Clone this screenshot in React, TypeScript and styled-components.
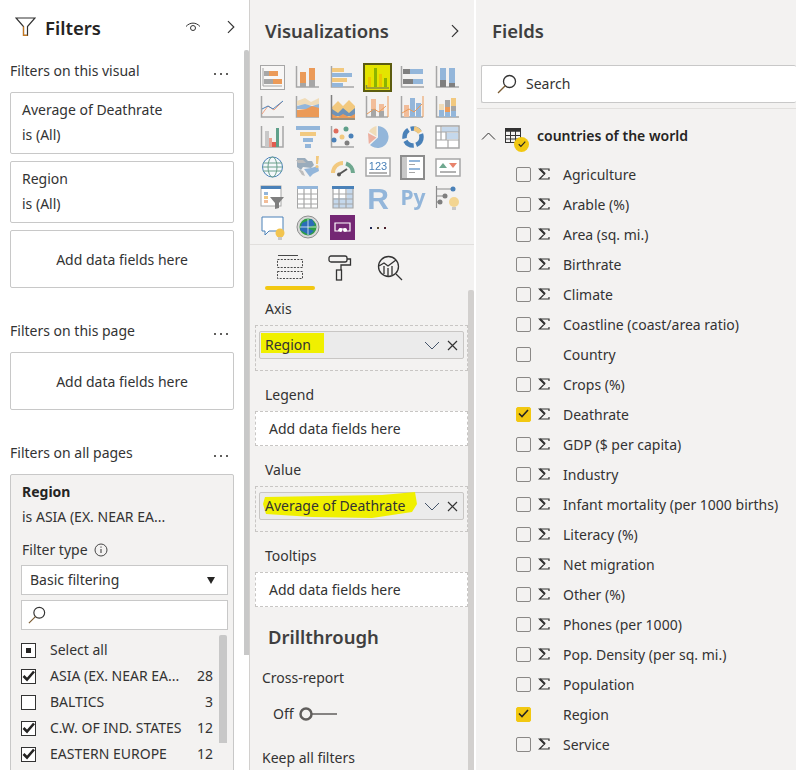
import React from "react";
import styled, { createGlobalStyle } from "styled-components";

const FONT = '"Noto Sans", "Open Sans", Arial, sans-serif';

const GlobalStyle = createGlobalStyle`
  html, body {
    margin: 0;
    padding: 0;
    height: 770px;
    overflow: hidden;
    background: #f3f2f1;
  }
  * { box-sizing: border-box; }
`;

const Page = styled.div`
  display: flex;
  width: 796px;
  height: 770px;
  overflow: hidden;
  font-family: ${FONT};
  font-size: 14px;
  color: #333;
  line-height: 22px;
`;

/* ---------- shared ---------- */
const PanelTitle = styled.div`
  font-size: 18.5px;
  font-weight: 600;
  color: #3f3f3f;
`;

const Scrollbar = styled.div<{ $left: number; $top: number; $height: number; $width: number; $color: string }>`
  position: absolute;
  left: ${(p) => p.$left}px;
  top: ${(p) => p.$top}px;
  width: ${(p) => p.$width}px;
  height: ${(p) => p.$height}px;
  background: ${(p) => p.$color};
  border-radius: 2px 2px 0 0;
`;

/* ---------- filters panel ---------- */
const FiltersPanel = styled.section`
  position: relative;
  width: 250px;
  flex: none;
  padding: 0 15px 0 10px;
  background: #fff;
  border-right: 1px solid #d2d0ce;
`;

const FiltersHeader = styled.header`
  display: flex;
  align-items: center;
  height: 54px;
  margin-left: 5px;
  ${PanelTitle} {
    margin-left: 9px;
    padding-top: 2px;
    flex: 1;
    color: #252423;
  }
`;

const HeaderIcon = styled.span<{ $mr: number }>`
  display: flex;
  margin-right: ${(p) => p.$mr}px;
`;

const SectionHead = styled.div<{ $mt: number }>`
  display: flex;
  justify-content: space-between;
  height: 22px;
  margin: ${(p) => p.$mt}px 0 10px;
`;

const Dots = styled.span`
  display: flex;
  align-items: center;
  gap: 4px;
  margin-right: 6px;
  padding-top: 5px;
  i {
    width: 2px;
    height: 2px;
    background: #605e5c;
  }
`;

const FilterCard = styled.div`
  height: 62px;
  margin-bottom: 7px;
  padding: 6px 11px;
  border: 1px solid #c8c8c8;
  border-radius: 2px;
  background: #fff;
  div + div {
    margin-top: 3px;
  }
`;

const AddCard = styled.div`
  display: flex;
  align-items: center;
  justify-content: center;
  height: 58px;
  border: 1px solid #c8c8c8;
  border-radius: 2px;
  padding-top: 1px;
`;

const ExpandedCard = styled.div`
  height: 320px;
  padding: 6px 5px 0 11px;
  border: 1px solid #c8c8c8;
  border-radius: 2px;
  background: #f3f2f1;
`;

const CardStrong = styled.div`
  font-weight: 700;
  color: #252423;
`;

const CardLine = styled.div`
  margin-top: 3px;
`;

const FilterType = styled.div`
  display: flex;
  align-items: center;
  gap: 6px;
  margin-top: 11px;
`;

const SelectBox = styled.div`
  display: flex;
  align-items: center;
  justify-content: space-between;
  height: 30px;
  margin: 4px 0 0 -1px;
  padding: 0 12px 0 8px;
  background: #fff;
  border: 1px solid #c8c8c8;
`;

const Caret = styled.span`
  width: 0;
  height: 0;
  border-left: 4px solid transparent;
  border-right: 4px solid transparent;
  border-top: 7px solid #252423;
`;

const SearchSmall = styled.div`
  display: flex;
  align-items: center;
  height: 30px;
  margin: 5px 0 0 -1px;
  padding-left: 6px;
  background: #fff;
  border: 1px solid #c8c8c8;
`;

const ValueList = styled.div`
  margin-top: 7px;
`;

const ValueRow = styled.div`
  display: flex;
  align-items: center;
  height: 26px;
  padding-right: 15px;
`;

const ValueBox = styled.span`
  display: flex;
  align-items: center;
  justify-content: center;
  flex: none;
  width: 15px;
  height: 15px;
  margin: 0 14px 0 -1px;
  border: 1px solid #333;
  background: #fff;
`;

const ValueDot = styled.i`
  width: 5px;
  height: 5px;
  background: #252423;
`;

const ValueName = styled.span`
  flex: 1;
  white-space: nowrap;
`;

/* ---------- visualizations panel ---------- */
const VizPanel = styled.section`
  position: relative;
  width: 226px;
  flex: none;
  background: #f3f2f1;
  border-right: 2px solid #fff;
`;

const PanelHeader = styled.header`
  display: flex;
  align-items: center;
  justify-content: space-between;
  height: 62px;
  padding: 0 14px 0 15px;
`;

const IconGrid = styled.div`
  display: grid;
  grid-template-columns: repeat(6, 35px);
  grid-auto-rows: 30px;
  height: 183px;
  padding-left: 5px;
  border-bottom: 1px solid #e1dfdd;
`;

const GridCell = styled.div`
  display: flex;
  align-items: center;
  justify-content: center;
  svg {
    filter: blur(0.3px);
  }
`;

const Tabs = styled.div`
  display: flex;
  height: 45px;
  padding-left: 15px;
`;

const Tab = styled.div`
  display: flex;
  flex-direction: column;
  align-items: center;
  justify-content: space-between;
  width: 50px;
  padding-top: 10px;
`;

const TabBar = styled.span<{ $active?: boolean }>`
  align-self: stretch;
  height: 4px;
  border-radius: 2px;
  background: ${(p) => (p.$active ? "#f2c811" : "transparent")};
`;

const WellLabel = styled.div<{ $mt: number }>`
  margin: ${(p) => p.$mt}px 0 5px 15px;
`;

const Well = styled.div<{ $filled?: boolean }>`
  display: flex;
  align-items: ${(p) => (p.$filled ? "flex-start" : "center")};
  width: 213px;
  height: ${(p) => (p.$filled ? 46 : 35)}px;
  margin-left: 5px;
  padding: ${(p) => (p.$filled ? "5px 3px" : "0 13px")};
  border: 1px dashed #c8c6c4;
  background: ${(p) => (p.$filled ? "#f3f2f1" : "#fff")};
`;

const FieldChip = styled.div`
  position: relative;
  display: flex;
  align-items: center;
  width: 205px;
  height: 28px;
  padding: 0 5px;
  border: 1px solid #c8c6c4;
  border-radius: 2px;
  background: #ebebeb;
`;

const ChipText = styled.span`
  position: relative;
  flex: 1;
`;

const RegionMark = styled.span`
  position: absolute;
  left: -4px;
  top: -1px;
  width: 63px;
  height: 20px;
  background: #f0f000;
`;

const ScribbleMark = styled.svg`
  position: absolute;
  left: -3px;
  top: -3px;
`;

const ChipLabel = styled.span`
  position: relative;
`;

const ChipIcons = styled.span`
  display: flex;
  align-items: center;
  gap: 7px;
`;

const DrillTitle = styled(PanelTitle)`
  margin: 16px 0 0 18px;
  line-height: 28px;
`;

const PlainLabel = styled.div<{ $mt: number }>`
  margin: ${(p) => p.$mt}px 0 0 12px;
`;

const ToggleRow = styled.div`
  display: flex;
  align-items: center;
  gap: 5px;
  height: 24px;
  margin: 13px 0 0 23px;
`;

/* ---------- fields panel ---------- */
const FieldsPanel = styled.section`
  flex: 1;
  background: #f3f2f1;
  border-left: 1px solid #f3f2f1;
`;

const SearchBox = styled.div`
  display: flex;
  align-items: center;
  gap: 9px;
  height: 38px;
  margin: 3px 0 0 4px;
  padding-left: 15px;
  background: #fff;
  border: 1px solid #c8c8c8;
  border-right: none;
  border-radius: 2px;
`;

const Rule = styled.div`
  height: 1px;
  margin-top: 5px;
  background: #e1dfdd;
`;

const TableRow = styled.div`
  position: relative;
  display: flex;
  align-items: center;
  height: 30px;
  margin-top: 12px;
  padding-left: 4px;
  font-weight: 600;
  color: #252423;
`;

const TableIcon = styled.span`
  position: relative;
  display: flex;
  margin: 0 16px 0 9px;
`;

const Badge = styled.span`
  position: absolute;
  left: 9px;
  top: 9px;
  display: flex;
  align-items: center;
  justify-content: center;
  width: 15px;
  height: 15px;
  border-radius: 50%;
  background: #f2c811;
`;

const FieldList = styled.div`
  margin-top: 8px;
`;

const FieldRow = styled.div`
  display: flex;
  align-items: center;
  height: 30px;
  padding-left: 39px;
`;

const FieldBox = styled.span<{ $checked: boolean }>`
  display: flex;
  align-items: center;
  justify-content: center;
  flex: none;
  width: 15px;
  height: 15px;
  border: 1px solid ${(p) => (p.$checked ? "#f2c811" : "#8a8886")};
  border-radius: 2px;
  background: ${(p) => (p.$checked ? "#f2c811" : "#f3f2f1")};
`;

const SigmaSlot = styled.span`
  display: flex;
  flex: none;
  justify-content: center;
  width: 32px;
  padding-right: 7px;
  padding-left: 1px;
`;

const FieldName = styled.span`
  padding-top: 1px;
  white-space: nowrap;
`;

/* ---------- small icons ---------- */
const Chevron = ({ size = 14 }: { size?: number }) => (
  <svg width={size * 0.7} height={size} viewBox="0 0 10 14" fill="none" stroke="#333" strokeWidth="1.2">
    <path d="M2 1l6 6-6 6" />
  </svg>
);

const Funnel = () => (
  <svg width="21" height="20" viewBox="0 0 21 20" fill="none" stroke="#333" strokeWidth="1.2">
    <path d="M1 1h19l-7.5 8.5v8.800h-4V9.500z" />
    <path d="M8.500 9.500v8.800h4" stroke="#c8791f" />
  </svg>
);

const Eye = () => (
  <svg width="16" height="11" viewBox="0 0 16 11" fill="none" stroke="#333" strokeWidth="1">
    <path d="M1 4.500C5 0 11 0 15 4.500" />
    <circle cx="8" cy="6" r="2.500" />
  </svg>
);

const Magnifier = ({ size }: { size: number }) => (
  <svg width={size} height={size} viewBox="0 0 20 20" fill="none" stroke="#333" strokeWidth="1.3">
    <circle cx="12.500" cy="7.500" r="6" />
    <path d="M8.200 11.800L1 19" stroke="#7a5a30" />
  </svg>
);

const Info = () => (
  <svg width="14" height="14" viewBox="0 0 14 14" fill="none" stroke="#333">
    <circle cx="7" cy="7" r="6" strokeWidth="0.9" />
    <path d="M7 6v4M7 3.500v1.200" strokeWidth="1" />
  </svg>
);

const Tick = () => (
  <svg width="13" height="12" viewBox="0 0 13 12" fill="none" stroke="#252423" strokeWidth="2.6">
    <path d="M1.500 6l3.500 3.500L12 1.500" />
  </svg>
);

const SmallTick = ({ size = 11 }: { size?: number }) => (
  <svg width={size} height={size * 0.82} viewBox="0 0 11 9" fill="none" stroke="#252423" strokeWidth="1.6">
    <path d="M1 4.500l3 3L10 1" />
  </svg>
);

const Sigma = () => (
  <svg width="12" height="12" viewBox="0 0 12 12" fill="none" stroke="#333" strokeWidth="1.2">
    <path d="M11 3V1H1.500L6.500 6 1.500 11H11V9" />
    <path d="M2 1l5 5" strokeWidth="2" />
  </svg>
);

const ChipControls = () => (
  <ChipIcons>
    <svg width="16" height="9" viewBox="0 0 16 9" fill="none" stroke="#44546a" strokeWidth="1">
      <path d="M1 1l7 7 7-7" />
    </svg>
    <svg width="11" height="11" viewBox="0 0 11 11" fill="none" stroke="#333" strokeWidth="1.2">
      <path d="M1 1l9 9M10 1l-9 9" />
    </svg>
  </ChipIcons>
);

/* ---------- visual gallery ---------- */
const OR = "#eb9a58";
const BL = "#93b6da";
const GR = "#a6a6a6";
const TN = "#f0dcb8";
const YL = "#f2c97f";
const DB = "#4a81b8";
const AX = "M1.500 1v21H24";

const Axis = ({ d = AX }: { d?: string }) => <path d={d} fill="none" stroke={GR} strokeWidth="1.500" />;
const R = (x: number, y: number, w: number, h: number, fill: string) => <rect x={x} y={y} width={w} height={h} fill={fill} />;

const visuals: React.ReactNode[] = [
  <>
    <rect x="0.500" y="0.500" width="24" height="24" fill="#f8f7f6" stroke={GR} />
    <path d="M3 3v18h19" fill="none" stroke={GR} />
    {R(4, 6, 5, 5, GR)}{R(9, 6, 9, 5, OR)}{R(4, 14, 9, 5, GR)}{R(13, 14, 9, 5, OR)}
  </>,
  <>
    <Axis />
    {R(5, 18, 6, 4, GR)}{R(5, 7, 6, 11, OR)}{R(14, 15, 6, 7, GR)}{R(14, 3, 6, 12, OR)}
  </>,
  <>
    <Axis />
    {R(2, 3, 12, 4, YL)}{R(2, 8, 20, 4, BL)}{R(2, 13, 15, 4, YL)}{R(2, 18, 11, 4, BL)}
  </>,
  <>
    <rect x="-1" y="-1" width="27" height="27" fill="#e4e400" stroke="#5c5c10" strokeWidth="2" />
    {R(3, 12, 3, 10, "#eec400")}{R(9, 3, 3, 19, "#8cb400")}{R(14, 9, 3, 13, "#eec400")}{R(19, 13, 3, 9, "#8cb400")}
    <path d="M1.500 20v3H24" fill="none" stroke="#8a8a40" strokeWidth="1.500" />
  </>,
  <>
    <Axis />
    {R(3, 4, 7, 5, "#7f7f7f")}{R(10, 4, 13, 5, BL)}{R(3, 14, 10, 5, "#7f7f7f")}{R(13, 14, 10, 5, BL)}
  </>,
  <>
    <Axis />
    {R(5, 3, 6, 12, BL)}{R(5, 15, 6, 7, "#7f7f7f")}{R(14, 3, 6, 15, BL)}{R(14, 18, 6, 4, "#7f7f7f")}
  </>,
  <>
    <Axis />
    <path d="M2 19L8 11l6 4 8-8" fill="none" stroke="#f0a080" />
    <path d="M2 14l6-3 5 3 10-8" fill="none" stroke={DB} />
  </>,
  <>
    <Axis />
    <path d="M2 6l8-3 6 4 8-4v7H2z" fill={TN} />
    <path d="M2 11l8-2 7 2 7-2v5H2z" fill={BL} />
    <path d="M2 15l9-1 6-3 7 2v9H2z" fill={OR} />
  </>,
  <>
    <path d="M2 12l6-6 5 5 6-6 6 6v14H2z" fill={YL} />
    <path d="M2 14l6 4 5-5 6 5 6-5v8H2z" fill="#6f93b8" />
    <path d="M2 19l6 3 5-3 6 3 6-3v4H2z" fill={OR} />
    <path d="M1.500 0v24H25" fill="none" stroke="#7f7f7f" strokeWidth="1.500" />
  </>,
  <>
    <path d="M1.500 1v21H23" fill="none" stroke={GR} strokeWidth="1.500" />
    <path d="M23 1v21" stroke={OR} />
    {R(6, 4, 5, 10, "#f2bd9a")}{R(6, 14, 5, 8, GR)}{R(14, 9, 5, 7, "#f2bd9a")}{R(14, 16, 5, 6, GR)}
    <path d="M2 19l7-5 5 3 7-6" fill="none" stroke={OR} />
  </>,
  <>
    <path d="M1.500 1v21H23" fill="none" stroke={GR} strokeWidth="1.500" />
    <path d="M23 1v21" stroke={OR} />
    {R(4, 10, 5, 12, "#f2bd9a")}{R(10, 3, 5, 19, BL)}{R(16, 8, 5, 14, BL)}
    <path d="M2 18l7-4 5 3 8-8" fill="none" stroke={OR} />
  </>,
  <>
    <path d="M1.500 1v21H24" fill="none" stroke={GR} strokeWidth="1.500" />
    {R(4, 9, 5, 6, TN)}{R(4, 15, 5, 7, BL)}{R(10, 5, 5, 7, GR)}{R(10, 12, 5, 5, OR)}{R(10, 17, 5, 5, BL)}{R(16, 3, 5, 8, YL)}{R(16, 11, 5, 5, GR)}{R(16, 16, 5, 6, BL)}
  </>,
  <>
    <path d="M1.500 1v21H23V1" fill="none" stroke={GR} strokeWidth="1.500" />
    {R(5, 6, 4, 16, "#c8c8c8")}{R(9, 13, 3, 9, "#e8a090")}{R(12, 17, 4, 5, "#e05c50")}{R(16, 3, 3, 19, "#5fa08a")}
  </>,
  <>
    {R(1, 1, 24, 4, BL)}{R(5, 7, 16, 4, YL)}{R(8, 13, 10, 4, BL)}{R(10, 19, 6, 4, BL)}
  </>,
  <>
    <Axis />
    <circle cx="6" cy="6" r="2.500" fill="#e06c5c" />
    <circle cx="16" cy="4" r="2.500" fill="#5fa08a" />
    <circle cx="4" cy="15" r="2.500" fill={DB} />
    <circle cx="12" cy="12" r="2.500" fill={YL} />
    <circle cx="21" cy="11" r="2.500" fill={DB} />
    <circle cx="17" cy="18" r="2.500" fill="#7f7f7f" />
  </>,
  <>
    <path d="M13 1a11 11 0 1 1-8 19l8-7.500z" fill={BL} />
    <path d="M3.800 19L3 8l8.500 4.500z" fill="#edb0a0" />
    <path d="M4 6.500A11 11 0 0 1 11.500 1v10.500z" fill={TN} />
  </>,
  <>
    <circle cx="13" cy="12" r="8.500" fill="none" stroke={DB} strokeWidth="4.500" strokeDasharray="10 2.500" />
    <path d="M14 3.500a8.500 8.500 0 0 1 6 4" fill="none" stroke={YL} strokeWidth="4.500" />
  </>,
  <>
    <rect x="1" y="1" width="23" height="22" fill="#fff" stroke={GR} strokeWidth="1.500" />
    {R(7, 2, 16, 5, "#c5d8ec")}{R(11, 8, 12, 6, "#c5d8ec")}
    <path d="M6 1v14M1 7h23M1 15h23M11 7v8M13 15v8" fill="none" stroke={GR} strokeWidth="1.200" />
  </>,
  <>
    <circle cx="12.500" cy="12" r="10" fill="#f4f8fb" stroke={DB} strokeWidth="1" />
    <ellipse cx="12.500" cy="12" rx="4.500" ry="10" fill="none" stroke="#6aa08c" />
    <path d="M3 8h19M2.500 12h20M3 16h19" fill="none" stroke="#6aa08c" />
  </>,
  <>
    <path d="M2 3h8l3 3h4l2 4-3 3-8-1-2 3-4-3z" fill="#9aacbc" />
    <path d="M1 5h7l3 3H3z" fill="#bdbdbd" />
    <path d="M9 14l7-1 7-2 1 5-6 3-3 3-3-4z" fill={BL} />
    <path d="M3 14l5 2 2 5-3-1z" fill="#bdbdbd" />
    <path d="M21 1h3l-1 8h-2z" fill={YL} />
    <circle cx="22" cy="11.500" r="1.500" fill={YL} />
  </>,
  <>
    <path d="M3 18a10 10 0 0 1 10-10" fill="none" stroke={YL} strokeWidth="4" />
    <path d="M16 8.500a10 10 0 0 1 7 9.500" fill="none" stroke="#6fa88f" strokeWidth="4" />
    <path d="M8 20l9-6" stroke="#555" strokeWidth="2" />
    <circle cx="9" cy="19.500" r="2" fill="#555" />
  </>,
  <>
    <rect x="1" y="3" width="24" height="18" fill="#fff" stroke={GR} strokeWidth="1.500" />
    <text x="13" y="14.500" textAnchor="middle" fontSize="11" fill={DB} fontFamily="Liberation Sans, sans-serif">123</text>
    <path d="M4 18h18" stroke="#7f7f7f" strokeWidth="1.200" />
  </>,
  <>
    <rect x="1" y="1" width="23" height="23" fill="#fff" stroke="#8c8c8c" strokeWidth="2" />
    {R(2, 2, 5, 21, "#c8c8c8")}{R(9, 5, 11, 2, BL)}{R(9, 9, 6, 1, GR)}{R(9, 13, 11, 2, BL)}{R(9, 17, 6, 1, GR)}
  </>,
  <>
    <rect x="1" y="4" width="24" height="17" fill="#fff" stroke={GR} strokeWidth="1.500" />
    <path d="M4 13l4-5 4 5z" fill="#6fa88f" />
    <path d="M14 8h8l-4 5z" fill="#e8836c" />
    <path d="M5 17h16" stroke="#7f7f7f" strokeWidth="1.200" />
  </>,
  <>
    <rect x="1" y="1" width="20" height="20" fill="#fff" stroke={GR} />
    {R(1, 1, 20, 3, DB)}
    {R(4, 7, 4, 3, BL)}{R(4, 11, 4, 3, YL)}{R(4, 15, 4, 3, "#f2bd9a")}
    <path d="M10 12h14l-5 6v5l-4 1v-6z" fill="#7f7f7f" />
  </>,
  <>
    <rect x="2.500" y="2" width="20" height="21" fill="#fff" stroke={GR} />
    {R(2, 1, 21, 3, BL)}
    <path d="M2.500 9h20M2.500 14h20M2.500 19h20M9 4v19M16 4v19" stroke={GR} fill="none" strokeWidth="1.200" />
  </>,
  <>
    {R(3, 4, 20, 19, "#c5d8ec")}
    {R(3, 4, 14, 9, "#fff")}
    {R(2, 1, 22, 3, DB)}
    <path d="M3 4v19h20V4M3 9h20M3 14h20M3 19h20M9 4v19M16 4v19" stroke={GR} fill="none" strokeWidth="1.200" />
  </>,
  <text x="13" y="24" textAnchor="middle" fontSize="30" fontWeight="700" fill={BL} fontFamily="Liberation Sans, sans-serif">R</text>,
  <text x="13" y="20" textAnchor="middle" fontSize="21" fontWeight="700" fill={BL} fontFamily="Noto Sans, sans-serif">Py</text>,
  <>
    <path d="M1.500 1v22M1.500 4H18M1.500 11H10M1.500 17H6" fill="none" stroke="#8c8c8c" strokeWidth="1.200" />
    <circle cx="18" cy="4" r="2.500" fill={DB} />
    <circle cx="10" cy="11" r="2.500" fill="#7f7f7f" />
    <circle cx="5" cy="17" r="2.500" fill="#7f7f7f" />
    <circle cx="19" cy="17" r="5" fill="#f3d592" />
    {R(17, 22, 4, 3, "#c8c8c8")}
  </>,
  <>
    <path d="M2 2h21v14H9l-4 4v-4H2z" fill="#fff" stroke={DB} strokeWidth="1" />
    <circle cx="20" cy="18" r="4.500" fill="#f2c44f" />
    {R(18, 22, 4, 3, "#c8c8c8")}
  </>,
  <>
    <circle cx="13" cy="12" r="11" fill="#d8d8d8" stroke="#8c8c8c" />
    <circle cx="13" cy="12" r="8.500" fill="#2f9e46" />
    <path d="M7 8l10-4 3 6-8 3 7 3-5 4-9-5z" fill="#2b6cb8" />
    <path d="M5 12h16M13 4v16" stroke="#e8f0f8" strokeWidth="0.800" />
  </>,
  <>
    {R(0, 0, 25, 25, "#742774")}
    <path d="M5 8h15v8h-3.500l-1-2h-6l-1 2H5z" fill="none" stroke="#fff" strokeWidth="1.200" />
    <circle cx="10.500" cy="15" r="2" fill="#fff" />
    <circle cx="15" cy="15" r="2" fill="#fff" />
  </>,
  <>
    <rect x="5" y="12" width="2" height="2" fill="#1f2a55" />
    <rect x="12" y="12" width="2" height="2" fill="#5a4a30" />
    <rect x="19" y="12" width="2" height="2" fill="#4a1f2a" />
  </>,
];

const FieldsTabIcon = () => (
  <svg width="26" height="25" viewBox="0 0 26 25" fill="none" stroke="#333" strokeWidth="0.900">
    <path d="M1 0.500h20" />
    <rect x="0.500" y="4.500" width="25" height="8" strokeDasharray="2 1.300" />
    <rect x="0.500" y="16.500" width="25" height="7" strokeDasharray="2 1.300" />
  </svg>
);

const FormatTabIcon = () => (
  <svg width="24" height="26" viewBox="0 0 24 26" fill="none" stroke="#333" strokeWidth="1.300">
    <rect x="1" y="1" width="18" height="6" rx="2" />
    <path d="M19 4h3.500v6H13v5" />
    <rect x="8.500" y="15" width="5" height="10" />
  </svg>
);

const AnalyticsTabIcon = () => (
  <svg width="26" height="26" viewBox="0 0 26 26" fill="none" stroke="#333" strokeWidth="1.300">
    <circle cx="11.500" cy="11.500" r="10" />
    <path d="M2 11l5-3 4 3 8-6" />
    <path d="M7 11v8M11 13v8M15 11v9" />
    <path d="M19 19l6 6" />
  </svg>
);

const ToggleOff = () => (
  <svg width="38" height="14" viewBox="0 0 38 14" fill="none" stroke="#605e5c">
    <circle cx="7" cy="7" r="5.500" strokeWidth="2.500" />
    <path d="M13 7h25" strokeWidth="1.500" />
  </svg>
);

const TableGlyph = () => (
  <svg width="16" height="16" viewBox="0 0 16 16" fill="none" stroke="#333">
    <rect x="0.500" y="0.500" width="15" height="14" />
    <path d="M0 1.500h16M0 3h16" strokeWidth="1.500" />
    <path d="M0 7.500h16M0 11h16M5.500 3v12M10.500 3v12" />
  </svg>
);

const filterValues = [
  { name: "ASIA (EX. NEAR EA...", count: 28, checked: true },
  { name: "BALTICS", count: 3, checked: false },
  { name: "C.W. OF IND. STATES", count: 12, checked: true },
  { name: "EASTERN EUROPE", count: 12, checked: true },
];

const fields = [
  { name: "Agriculture" },
  { name: "Arable (%)" },
  { name: "Area (sq. mi.)" },
  { name: "Birthrate" },
  { name: "Climate" },
  { name: "Coastline (coast/area ratio)" },
  { name: "Country", text: true },
  { name: "Crops (%)" },
  { name: "Deathrate", checked: true },
  { name: "GDP ($ per capita)" },
  { name: "Industry" },
  { name: "Infant mortality (per 1000 births)" },
  { name: "Literacy (%)" },
  { name: "Net migration" },
  { name: "Other (%)" },
  { name: "Phones (per 1000)" },
  { name: "Pop. Density (per sq. mi.)" },
  { name: "Population" },
  { name: "Region", text: true, checked: true },
  { name: "Service" },
];

const MoreDots = () => (
  <Dots>
    <i />
    <i />
    <i />
  </Dots>
);

const App: React.FC = () => {
  return (
    <Page>
      <GlobalStyle />

      <FiltersPanel>
        <FiltersHeader>
          <Funnel />
          <PanelTitle>Filters</PanelTitle>
          <HeaderIcon $mr={25}>
            <Eye />
          </HeaderIcon>
          <HeaderIcon $mr={-2}>
            <Chevron />
          </HeaderIcon>
        </FiltersHeader>

        <SectionHead $mt={6}>
          <span>Filters on this visual</span>
          <MoreDots />
        </SectionHead>
        <FilterCard>
          <div>Average of Deathrate</div>
          <div>is (All)</div>
        </FilterCard>
        <FilterCard>
          <div>Region</div>
          <div>is (All)</div>
        </FilterCard>
        <AddCard>Add data fields here</AddCard>

        <SectionHead $mt={32}>
          <span>Filters on this page</span>
          <MoreDots />
        </SectionHead>
        <AddCard>Add data fields here</AddCard>

        <SectionHead $mt={32}>
          <span>Filters on all pages</span>
          <MoreDots />
        </SectionHead>
        <ExpandedCard>
          <CardStrong>Region</CardStrong>
          <CardLine>is ASIA (EX. NEAR EA...</CardLine>
          <FilterType>
            Filter type <Info />
          </FilterType>
          <SelectBox>
            Basic filtering
            <Caret />
          </SelectBox>
          <SearchSmall>
            <Magnifier size={18} />
          </SearchSmall>
          <ValueList>
            <ValueRow>
              <ValueBox>
                <ValueDot />
              </ValueBox>
              <ValueName>Select all</ValueName>
            </ValueRow>
            {filterValues.map((v) => (
              <ValueRow key={v.name}>
                <ValueBox>{v.checked && <Tick />}</ValueBox>
                <ValueName>{v.name}</ValueName>
                <span>{v.count}</span>
              </ValueRow>
            ))}
          </ValueList>
        </ExpandedCard>
        <Scrollbar $left={219} $top={635} $width={8} $height={108} $color="#c8c8c8" />
        <Scrollbar $left={244} $top={50} $width={5} $height={605} $color="#c8c8c8" />
      </FiltersPanel>

      <VizPanel>
        <PanelHeader>
          <PanelTitle>Visualizations</PanelTitle>
          <Chevron />
        </PanelHeader>
        <IconGrid>
          {visuals.map((icon, i) => (
            <GridCell key={i}>
              <svg width="25" height="25" viewBox="0 0 25 25" overflow="visible">
                {icon}
              </svg>
            </GridCell>
          ))}
        </IconGrid>
        <Tabs>
          <Tab>
            <FieldsTabIcon />
            <TabBar $active />
          </Tab>
          <Tab>
            <FormatTabIcon />
            <TabBar />
          </Tab>
          <Tab>
            <AnalyticsTabIcon />
            <TabBar />
          </Tab>
        </Tabs>

        <WellLabel $mt={8}>Axis</WellLabel>
        <Well $filled>
          <FieldChip>
            <ChipText>
              <RegionMark />
              <ChipLabel>Region</ChipLabel>
            </ChipText>
            <ChipControls />
          </FieldChip>
        </Well>

        <WellLabel $mt={13}>Legend</WellLabel>
        <Well>Add data fields here</Well>

        <WellLabel $mt={13}>Value</WellLabel>
        <Well $filled>
          <FieldChip>
            <ChipText>
              <ScribbleMark width="156" height="30" viewBox="0 0 156 30">
                <path d="M3 5L60 4 120 3 153 0 155 12 150 20 110 26 50 25 4 22 1 12z" fill="#f0f000" />
              </ScribbleMark>
              <ChipLabel>Average of Deathrate</ChipLabel>
            </ChipText>
            <ChipControls />
          </FieldChip>
        </Well>

        <WellLabel $mt={13}>Tooltips</WellLabel>
        <Well>Add data fields here</Well>

        <DrillTitle>Drillthrough</DrillTitle>
        <PlainLabel $mt={16}>Cross-report</PlainLabel>
        <ToggleRow>
          Off <ToggleOff />
        </ToggleRow>
        <PlainLabel $mt={21}>Keep all filters</PlainLabel>
        <Scrollbar $left={218} $top={290} $width={6} $height={480} $color="#d2d0ce" />
      </VizPanel>

      <FieldsPanel>
        <PanelHeader>
          <PanelTitle>Fields</PanelTitle>
        </PanelHeader>
        <SearchBox>
          <Magnifier size={20} />
          Search
        </SearchBox>
        <Rule />
        <TableRow>
          <svg width="15" height="8" viewBox="0 0 15 8" fill="none" stroke="#333" strokeWidth="1">
            <path d="M1 7.500l6.500-6.500 6.500 6.500" />
          </svg>
          <TableIcon>
            <TableGlyph />
            <Badge>
              <SmallTick size={8} />
            </Badge>
          </TableIcon>
          countries of the world
        </TableRow>
        <FieldList>
          {fields.map((f) => (
            <FieldRow key={f.name}>
              <FieldBox $checked={!!f.checked}>{f.checked && <SmallTick />}</FieldBox>
              <SigmaSlot>{!f.text && <Sigma />}</SigmaSlot>
              <FieldName>{f.name}</FieldName>
            </FieldRow>
          ))}
        </FieldList>
      </FieldsPanel>
    </Page>
  );
};

export default App;
